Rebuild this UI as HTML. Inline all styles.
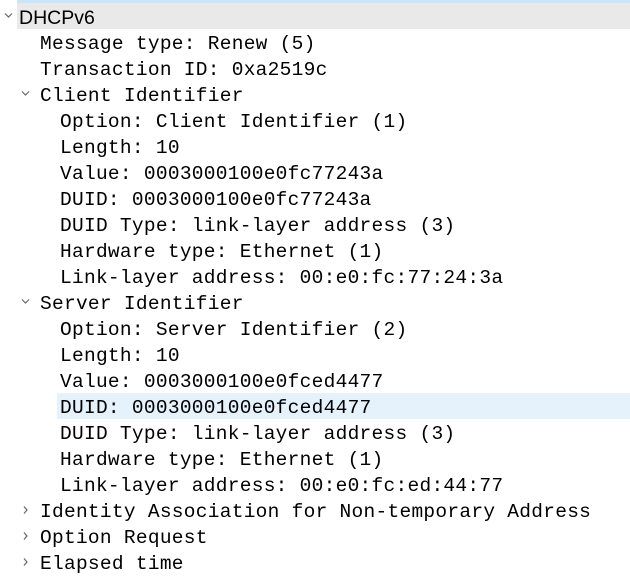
<!DOCTYPE html>
<html><head><style>
body{margin:0;width:630px;height:588px;background:#fff;position:relative;overflow:hidden;font-family:"Liberation Mono",monospace;font-size:19.5px;letter-spacing:0.28px;color:#000}
.r{position:absolute;left:0;height:26px;line-height:30px;white-space:pre}
</style></head><body>
<div style="position:absolute;left:17px;top:0;width:613px;height:3px;background:#cce4f7"></div>
<div style="position:absolute;left:17px;top:3px;width:613px;height:26px;background:#e9e9e9"></div>
<div style="position:absolute;left:57px;top:393px;width:573px;height:26px;background:#e5f1fb"></div>
<svg style="position:absolute;left:0;top:0" width="630" height="588">
<g fill="none" stroke="#666" stroke-width="1.2">
<path d="M5 13.5l3.5 3.5 3.5-3.5"/>
<path d="M22 91.5l3.5 3.5 3.5-3.5"/>
<path d="M22 299.5l3.5 3.5 3.5-3.5"/>
<path d="M24 506.5l3 3.5-3 3.5"/>
<path d="M24 532.5l3 3.5-3 3.5"/>
<path d="M24 558.5l3 3.5-3 3.5"/>
</g></svg>
<div class="r" style="top:3px;left:19px;font-family:'Liberation Sans',sans-serif;font-size:19.5px;letter-spacing:0">DHCPv6</div>
<div class="r" style="top:29px;left:40px">Message type: Renew (5)</div>
<div class="r" style="top:55px;left:40px">Transaction ID: 0xa2519c</div>
<div class="r" style="top:81px;left:40px">Client Identifier</div>
<div class="r" style="top:107px;left:60px">Option: Client Identifier (1)</div>
<div class="r" style="top:133px;left:60px">Length: 10</div>
<div class="r" style="top:159px;left:60px">Value: 0003000100e0fc77243a</div>
<div class="r" style="top:185px;left:60px">DUID: 0003000100e0fc77243a</div>
<div class="r" style="top:211px;left:60px">DUID Type: link-layer address (3)</div>
<div class="r" style="top:237px;left:60px">Hardware type: Ethernet (1)</div>
<div class="r" style="top:263px;left:60px">Link-layer address: 00:e0:fc:77:24:3a</div>
<div class="r" style="top:289px;left:40px">Server Identifier</div>
<div class="r" style="top:315px;left:60px">Option: Server Identifier (2)</div>
<div class="r" style="top:341px;left:60px">Length: 10</div>
<div class="r" style="top:367px;left:60px">Value: 0003000100e0fced4477</div>
<div class="r" style="top:393px;left:60px">DUID: 0003000100e0fced4477</div>
<div class="r" style="top:419px;left:60px">DUID Type: link-layer address (3)</div>
<div class="r" style="top:445px;left:60px">Hardware type: Ethernet (1)</div>
<div class="r" style="top:471px;left:60px">Link-layer address: 00:e0:fc:ed:44:77</div>
<div class="r" style="top:497px;left:40px">Identity Association for Non-temporary Address</div>
<div class="r" style="top:523px;left:40px">Option Request</div>
<div class="r" style="top:549px;left:40px">Elapsed time</div>
</body></html>
